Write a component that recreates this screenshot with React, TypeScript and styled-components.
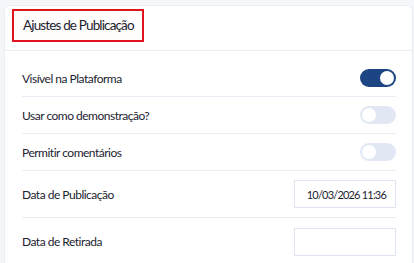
import styled, { createGlobalStyle } from "styled-components";

const GlobalStyle = createGlobalStyle`
  html, body {
    margin: 0;
    padding: 0;
    background: #f4f6fa;
  }
  body {
    font-family: Lato, "Noto Sans", sans-serif;
    color: #1c2330;
  }
`;

const Page = styled.div`
  padding: 5px 1px 0 4px;
  height: 263px;
  box-sizing: border-box;
  overflow: hidden;
`;

const Card = styled.section`
  background: #ffffff;
  border: 1px solid #e9edf5;
  border-bottom: none;
  border-radius: 6px 6px 0 0;
  height: 100%;
  box-sizing: border-box;
`;

const CardHeader = styled.header`
  height: 45px;
  box-sizing: border-box;
  padding: 3px 0 0 7px;
  border-bottom: 1px solid #e9edf5;
`;

const Title = styled.h2`
  display: inline-block;
  margin: 0;
  padding: 0 8px 0 9px;
  height: 33px;
  line-height: 29px;
  box-sizing: border-box;
  border: 2px solid #e0141c;
  background: #fffdfb;
  font-size: 13.5px;
  letter-spacing: -0.85px;
  font-weight: 400;
  color: #1c2330;
`;

const Body = styled.div`
  padding: 9px 16px 0 17px;
`;

const Row = styled.div<{ $tall?: boolean; $last?: boolean }>`
  display: flex;
  align-items: center;
  justify-content: space-between;
  height: ${({ $tall }) => ($tall ? 47 : 37)}px;
  box-sizing: border-box;
  border-bottom: ${({ $last }) => ($last ? "none" : "1px solid #e8edf5")};
`;

const Label = styled.span`
  font-size: 12px;
  letter-spacing: -0.5px;
  color: #1c2330;
`;

const Toggle = styled.span<{ $on?: boolean }>`
  position: relative;
  width: 36px;
  height: 18px;
  border-radius: 9px;
  background: ${({ $on }) => ($on ? "#1d4483" : "#e1e8f4")};

  &::after {
    content: "";
    position: absolute;
    top: 2px;
    left: ${({ $on }) => ($on ? "20px" : "2px")};
    width: 14px;
    height: 14px;
    border-radius: 50%;
    background: #ffffff;
  }
`;

const DateBox = styled.div`
  width: 102px;
  height: 28px;
  box-sizing: border-box;
  border: 1px solid #dfe5f0;
  padding-right: 9px;
  display: flex;
  align-items: center;
  justify-content: flex-end;
  white-space: nowrap;
  font-size: 11px;
  letter-spacing: -0.8px;
  color: #1c2330;
`;

export default function App() {
  return (
    <>
      <GlobalStyle />
      <Page>
        <Card>
          <CardHeader>
            <Title>Ajustes de Publicação</Title>
          </CardHeader>
          <Body>
            <Row>
              <Label>Visível na Plataforma</Label>
              <Toggle $on />
            </Row>
            <Row>
              <Label>Usar como demonstração?</Label>
              <Toggle />
            </Row>
            <Row>
              <Label>Permitir comentários</Label>
              <Toggle />
            </Row>
            <Row $tall>
              <Label>Data de Publicação</Label>
              <DateBox>10/03/2026 11:36</DateBox>
            </Row>
            <Row $tall $last>
              <Label>Data de Retirada</Label>
              <DateBox />
            </Row>
          </Body>
        </Card>
      </Page>
    </>
  );
}
